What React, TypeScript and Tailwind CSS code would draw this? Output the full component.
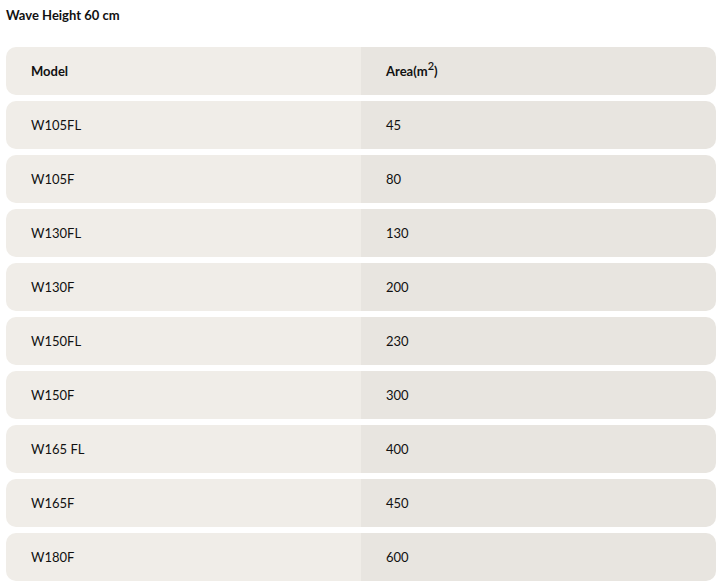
import React from 'react';

interface Row {
  model: string;
  area: string;
}

const rows: Row[] = [
  { model: 'W105FL', area: '45' },
  { model: 'W105F', area: '80' },
  { model: 'W130FL', area: '130' },
  { model: 'W130F', area: '200' },
  { model: 'W150FL', area: '230' },
  { model: 'W150F', area: '300' },
  { model: 'W165 FL', area: '400' },
  { model: 'W165F', area: '450' },
  { model: 'W180F', area: '600' },
];

const TableRow: React.FC<{ left: React.ReactNode; right: React.ReactNode; bold?: boolean }> = ({
  left,
  right,
  bold,
}) => (
  <div className={`flex h-12 rounded-[10px] overflow-hidden ${bold ? 'font-bold' : ''}`}>
    <div className="w-[355px] bg-[#f0ede8] flex items-center pl-[25px] pt-px">{left}</div>
    <div className="flex-1 bg-[#e8e5e0] flex items-center pl-[25px] pt-px">{right}</div>
  </div>
);

export default function App() {
  return (
    <div
      className="bg-white text-[13px] text-[#111] px-[6px] pt-[6px] pb-px"
      style={{ fontFamily: 'Lato, "Open Sans", sans-serif' }}
    >
      <h2 className="font-bold leading-[18px] mb-[23px]">Wave Height 60 cm</h2>
      <div className="flex flex-col gap-[6px] w-[710px]">
        <TableRow
          bold
          left="Model"
          right={
            <span>
              Area(m<sup className="text-[11px] font-semibold">2</sup>)
            </span>
          }
        />
        {rows.map((r) => (
          <TableRow key={r.model} left={r.model} right={r.area} />
        ))}
      </div>
    </div>
  );
}
